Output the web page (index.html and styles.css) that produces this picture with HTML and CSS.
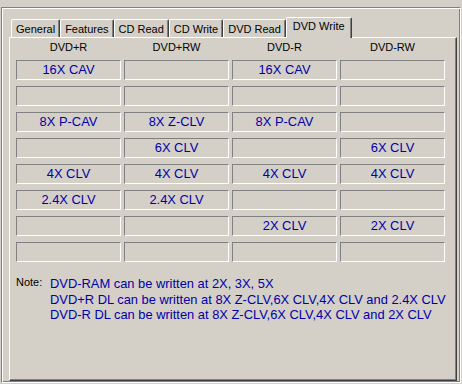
FILE: index.html
```html
<!DOCTYPE html>
<html lang="en">
<head>
    <meta charset="UTF-8">
    <title>DVD Write</title>
    <link rel="stylesheet" href="styles.css">
</head>
<body>
    <div class="frame">
        <!-- tab strip -->
        <div class="tabs">
            <div class="tab">General</div>
            <div class="tab">Features</div>
            <div class="tab">CD Read</div>
            <div class="tab">CD Write</div>
            <div class="tab">DVD Read</div>
            <div class="tab active">DVD Write</div>
        </div>

        <div class="panel">
            <div class="heads">
                <div>DVD+R</div>
                <div>DVD+RW</div>
                <div>DVD-R</div>
                <div>DVD-RW</div>
            </div>

            <div class="speeds">
                <div class="cell">16X CAV</div><div class="cell"></div><div class="cell">16X CAV</div><div class="cell"></div>
                <div class="cell"></div><div class="cell"></div><div class="cell"></div><div class="cell"></div>
                <div class="cell">8X P-CAV</div><div class="cell">8X Z-CLV</div><div class="cell">8X P-CAV</div><div class="cell"></div>
                <div class="cell"></div><div class="cell">6X CLV</div><div class="cell"></div><div class="cell">6X CLV</div>
                <div class="cell">4X CLV</div><div class="cell">4X CLV</div><div class="cell">4X CLV</div><div class="cell">4X CLV</div>
                <div class="cell">2.4X CLV</div><div class="cell">2.4X CLV</div><div class="cell"></div><div class="cell"></div>
                <div class="cell"></div><div class="cell"></div><div class="cell">2X CLV</div><div class="cell">2X CLV</div>
                <div class="cell"></div><div class="cell"></div><div class="cell"></div><div class="cell"></div>
            </div>

            <div class="note">
                <span class="note-label">Note:</span>
                <div class="note-text">
                    <p>DVD-RAM can be written at 2X, 3X, 5X</p>
                    <p>DVD+R DL can be written at 8X Z-CLV,6X CLV,4X CLV and 2.4X CLV</p>
                    <p>DVD-R DL can be written at 8X Z-CLV,6X CLV,4X CLV and 2X CLV</p>
                </div>
            </div>
        </div>
    </div>
</body>
</html>
```

FILE: styles.css
```css
* {
    margin: 0;
    padding: 0;
    box-sizing: border-box;
}

body {
    font-family: 'Liberation Sans', Arial, sans-serif;
    font-size: 11px;
    color: #000;
    background: #d4d0c8;
    width: 462px;
    height: 384px;
    overflow: hidden;
}

/* etched outer frame */
.frame {
    width: 460px;
    height: 376px;
    margin: 7px 0 0 1px;
    padding: 9px 3px 1px 7px;
    border: 1px solid;
    border-color: #808080 #fff #fff #808080;
    box-shadow: inset 1px 1px #fff, inset -1px -1px #808080;
}

.tabs {
    display: flex;
    align-items: flex-end;
    height: 20px;
    margin-left: 2px;
}

.tab {
    height: 18px;
    padding: 1px 4px 0 4px;
    line-height: 16px;
    white-space: nowrap;
    border: 1px solid #fff;
    border-right-color: #404040;
    border-bottom: none;
    border-radius: 2px 2px 0 0;
    box-shadow: inset -1px 0 #808080;
}

.tab.active {
    position: relative;
    z-index: 1;
    height: 21px;
    margin: 0 0 -1px 0;
    padding: 0 6px;
    background: #d4d0c8;
}

.panel {
    height: 344px;
    padding: 3px 0 0 6px;
    border: 1px solid;
    border-color: #fff #404040 #404040 #fff;
    box-shadow: inset -1px -1px #808080;
}

.heads,
.speeds {
    display: grid;
    grid-template-columns: repeat(4, 105px);
    column-gap: 3px;
}

.heads {
    line-height: 13px;
    margin-bottom: 6px;
    text-align: center;
}

.speeds {
    row-gap: 6px;
}

.cell {
    height: 20px;
    border: 1px solid;
    border-color: #808080 #fff #fff #808080;
    color: #0000a8;
    font-size: 12.9px;
    line-height: 18px;
    text-align: center;
}

.note {
    display: flex;
    margin-top: 14px;
}

.note-label {
    width: 34px;
    margin-top: -1px;
    line-height: 15.5px;
}

.note-text {
    color: #0000a8;
    font-size: 12.9px;
    line-height: 15.5px;
}
```
